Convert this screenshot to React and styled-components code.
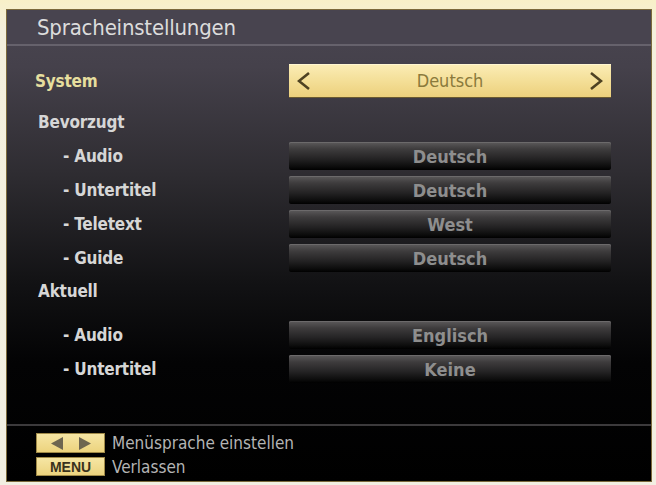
import React from 'react'
import styled, {createGlobalStyle} from 'styled-components'

const Global=createGlobalStyle`
    html, body {
        margin: 0;
        padding: 0;
        background: #f4f0dc;
    }
    body {
        font-family: "DejaVu Sans Condensed", "DejaVu Sans", sans-serif;
    }
`

const Frame=styled.div`
    width: 656px;
    height: 485px;
    box-sizing: border-box;
    padding: 9px 4px 3px 6px;
    background: linear-gradient(180deg, #f8f0c8 0%, #f4f0dc 6%, #f2efe2 100%);
`

const Panel=styled.div`
    height: 100%;
    box-sizing: border-box;
    display: flex;
    flex-direction: column;
    border: 1px solid #7c6a3c;
    background: linear-gradient(180deg, #4a4651 0%, #45414b 12%, #2e2c31 35%, #121214 58%, #030304 75%, #000 100%);
`

const TitleBar=styled.div`
    height: 34px;
    display: flex;
    align-items: center;
    padding-left: 30px;
    font-size: 22px;
    color: #dcdcdc;
    letter-spacing: -0.2px;
    border-bottom: 2px solid #66626c;
    background: #48444f;
`

const Body=styled.div`
    flex: 1;
    display: flex;
    flex-direction: column;
    padding: 18px 0 0 28px;
`

const Row=styled.div`
    display: grid;
    grid-template-columns: 254px 322px;
    align-items: center;
    height: ${p => p.tall ? 33 : 28}px;
    margin-top: ${p => p.gap || 0}px;
`

const Label=styled.div`
    font-size: 17px;
    font-weight: bold;
    color: ${p => p.active ? '#e6de9e' : '#d6d6d6'};
    padding-left: ${p => p.sub ? 28 : 0}px;
    letter-spacing: -0.2px;
`

const Heading=styled.div`
    height: 22px;
    display: flex;
    align-items: center;
    padding-left: 3px;
    margin-top: ${p => p.gap}px;
    font-size: 17px;
    font-weight: bold;
    color: #d6d6d6;
    letter-spacing: -0.2px;
`

const Selector=styled.div`
    height: 33px;
    display: flex;
    align-items: center;
    justify-content: space-between;
    padding: 0 8px;
    box-sizing: border-box;
    background: linear-gradient(180deg, #fbedb6 0%, #f4df98 50%, #ecd07c 100%);
    box-shadow: inset 0 1px 0 #fff6d0, 0 1px 0 #6a5a30;
    color: #8a7a3c;
    font-size: 18px;
`

const Chevron=({dir}) => (
    <svg width="14" height="20" viewBox="0 0 14 20">
        <polyline
            points={dir === 'left' ? '12,2 2,10 12,18' : '2,2 12,10 2,18'}
            fill="none" stroke="#4e4222" strokeWidth="2.6" strokeLinejoin="miter" />
    </svg>
)

const ValueBox=styled.div`
    height: 28px;
    display: flex;
    align-items: center;
    justify-content: center;
    font-size: 18px;
    font-weight: bold;
    color: #8e8e8e;
    border-radius: 2px;
    background: linear-gradient(180deg, #5c5a5b 0%, #3e3c3d 25%, #242324 60%, #0c0c0c 88%, #000 100%);
    box-shadow: inset 0 1px 0 #6c6a6b;
`

const Footer=styled.div`
    height: 57px;
    box-sizing: border-box;
    border-top: 2px solid #3c3a3c;
    padding: 7px 0 0 29px;
    display: flex;
    flex-direction: column;
    gap: 4px;
`

const Hint=styled.div`
    display: flex;
    align-items: center;
    gap: 7px;
    height: ${p => p.h}px;
    font-size: 17px;
    color: #b4b4b4;
`

const Key=styled.div`
    width: 69px;
    height: 100%;
    box-sizing: border-box;
    display: flex;
    align-items: center;
    justify-content: center;
    gap: 14px;
    border: 1px solid #a08a48;
    background: linear-gradient(180deg, #f6e6a4 0%, #ecd37e 100%);
    font-family: "Liberation Sans", Arial, sans-serif;
    font-weight: bold;
    font-size: 14px;
    color: #3a321c;
`

const Tri=({dir}) => (
    <svg width="14" height="13" viewBox="0 0 14 13">
        {dir === 'left'
            ? <polygon points="13,0 13,13 1,6.5" fill="#6e6650" />
            : <polygon points="1,0 1,13 13,6.5" fill="#6e6650" />}
    </svg>
)

const preferred=[
    ['- Audio', 'Deutsch'],
    ['- Untertitel', 'Deutsch'],
    ['- Teletext', 'West'],
    ['- Guide', 'Deutsch']
]

const current=[
    ['- Audio', 'Englisch'],
    ['- Untertitel', 'Keine']
]

export default function App() {
    return(<Frame>
        <Global />
        <Panel>
            <TitleBar>Spracheinstellungen</TitleBar>
            <Body>
                <Row tall>
                    <Label active>System</Label>
                    <Selector>
                        <Chevron dir="left" />
                        <span>Deutsch</span>
                        <Chevron dir="right" />
                    </Selector>
                </Row>
                <Heading gap={14}>Bevorzugt</Heading>
                {preferred.map(([l, v], i) => (
                    <Row key={l} gap={i === 0 ? 9 : 6}>
                        <Label sub>{l}</Label>
                        <ValueBox>{v}</ValueBox>
                    </Row>
                ))}
                <Heading gap={8}>Aktuell</Heading>
                {current.map(([l, v], i) => (
                    <Row key={l} gap={i === 0 ? 19 : 6}>
                        <Label sub>{l}</Label>
                        <ValueBox>{v}</ValueBox>
                    </Row>
                ))}
            </Body>
            <Footer>
                <Hint h={20}>
                    <Key><Tri dir="left" /><Tri dir="right" /></Key>
                    Menüsprache einstellen
                </Hint>
                <Hint h={19}>
                    <Key>MENU</Key>
                    Verlassen
                </Hint>
            </Footer>
        </Panel>
    </Frame>)
}
